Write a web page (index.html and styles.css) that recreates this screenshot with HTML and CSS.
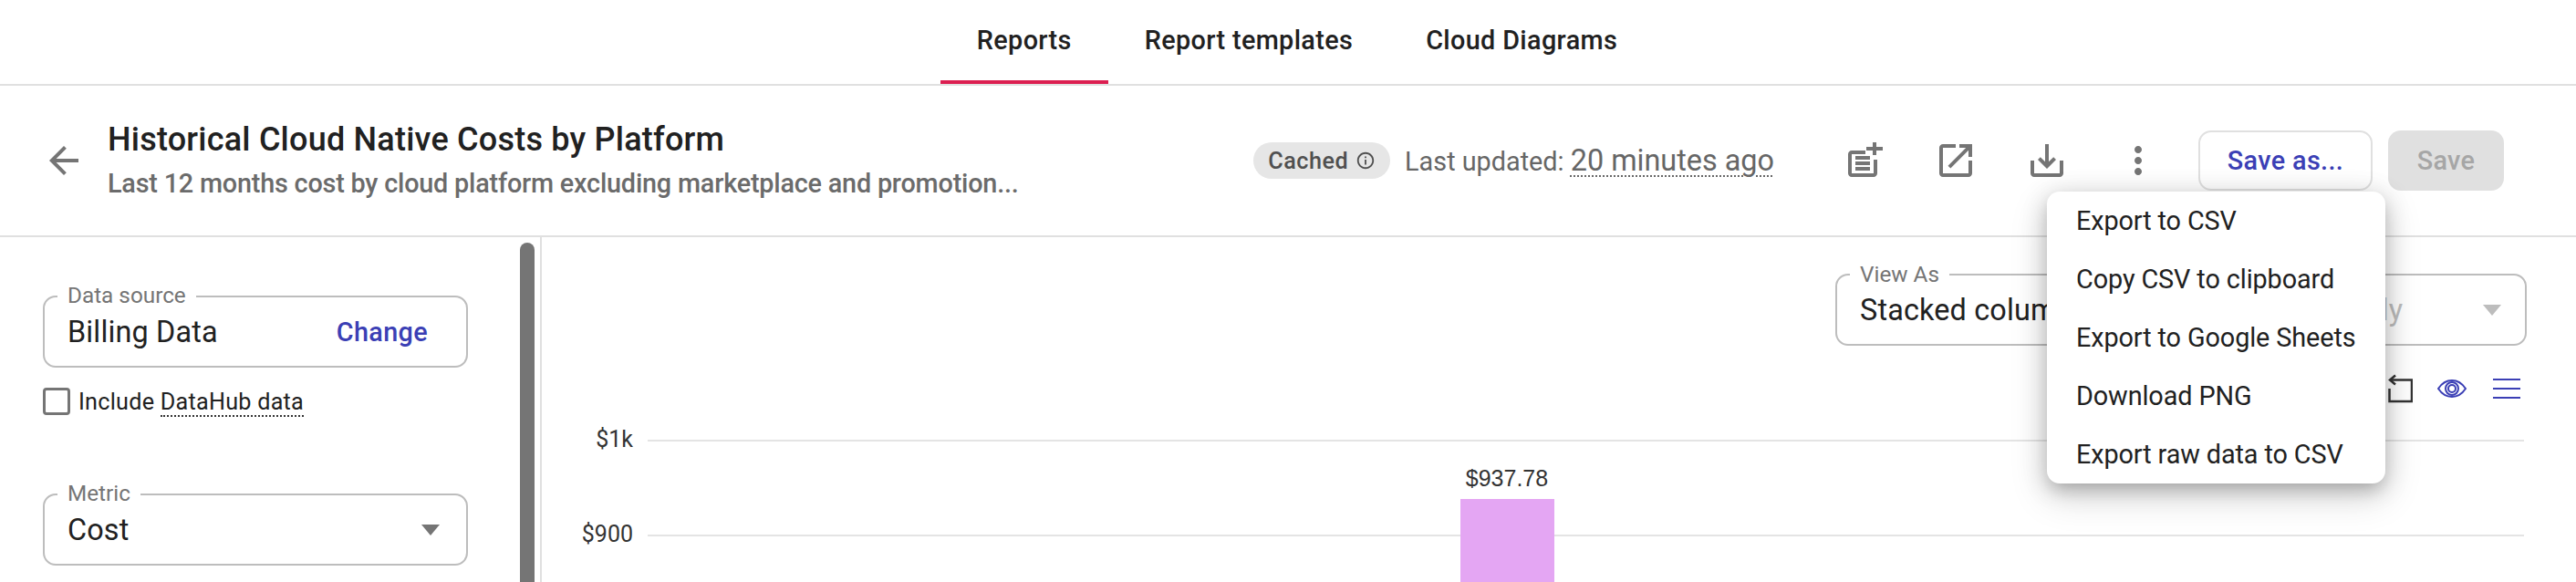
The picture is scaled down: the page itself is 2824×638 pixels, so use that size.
FILE: index.html
```html
<!DOCTYPE html>
<html lang="en">
<head>
  <meta charset="UTF-8" />
  <title>Historical Cloud Native Costs by Platform</title>
  <link rel="stylesheet" href="styles.css">
</head>
<body>

  <nav class="tabs">
    <a class="tab active">Reports</a>
    <a class="tab">Report templates</a>
    <a class="tab">Cloud Diagrams</a>
  </nav>

  <header class="report-header">
    <svg class="back-icon" viewBox="0 0 24 24"><path d="M20 11H7.83l5.59-5.59L12 4l-8 8 8 8 1.41-1.41L7.83 13H20v-2z"/></svg>
    <div class="report-title">
      <h1>Historical Cloud Native Costs by Platform</h1>
      <p>Last 12 months cost by cloud platform excluding marketplace and promotion...</p>
    </div>
    <span class="chip">Cached
      <svg viewBox="0 0 24 24"><path d="M11 7h2v2h-2zm0 4h2v6h-2zm1-9C6.48 2 2 6.48 2 12s4.48 10 10 10 10-4.48 10-10S17.52 2 12 2zm0 18c-4.41 0-8-3.59-8-8s3.59-8 8-8 8 3.59 8 8-3.59 8-8 8z"/></svg>
    </span>
    <span class="updated">Last updated: <span class="dotted">20 minutes ago</span></span>
    <div class="header-icons">
      <svg viewBox="0 0 24 24"><path d="M16.500 2h2v2.500H22v2h-3.500V9h-2V6.500H13v-2h3.500z"/><path d="M3 8.500c0-1.100.9-2 2-2h7.500v2H5V19h12v-7.500h2V19c0 1.100-.9 2-2 2H5c-1.100 0-2-.9-2-2z"/><path d="M7 9.500h8v2H7zM7 12.500h8v2H7zM7 15.500h8v2H7z"/></svg>
      <svg viewBox="0 0 24 24"><path d="M19 19H5V5h7V3H5c-1.110 0-2 .9-2 2v14c0 1.100.89 2 2 2h14c1.100 0 2-.9 2-2v-7h-2v7zM14 3v2h3.590l-9.830 9.830 1.410 1.410L19 6.410V10h2V3h-7z"/></svg>
      <svg viewBox="0 0 24 24"><path d="M19 12v7H5v-7H3v7c0 1.100.9 2 2 2h14c1.100 0 2-.9 2-2v-7h-2zm-6 .67l2.590-2.580L17 11.500l-5 5-5-5 1.410-1.410L11 12.670V3h2z"/></svg>
      <svg viewBox="0 0 24 24"><path d="M12 8c1.100 0 2-.9 2-2s-.9-2-2-2-2 .9-2 2 .9 2 2 2zm0 2c-1.100 0-2 .9-2 2s.9 2 2 2 2-.9 2-2-.9-2-2-2zm0 6c-1.100 0-2 .9-2 2s.9 2 2 2 2-.9 2-2-.9-2-2-2z"/></svg>
    </div>
    <button class="btn-outline">Save as...</button>
    <button class="btn-disabled">Save</button>
  </header>

  <ul class="menu">
    <li>Export to CSV</li>
    <li>Copy CSV to clipboard</li>
    <li>Export to Google Sheets</li>
    <li>Download PNG</li>
    <li>Export raw data to CSV</li>
  </ul>

  <div class="workspace">
    <aside class="sidebar">
      <div class="side-col">
        <div class="field">
          <label>Data source</label>
          <span class="value">Billing Data</span>
          <a class="change">Change</a>
        </div>
        <div class="check-row">
          <span class="checkbox"></span>
          <span>Include <span class="dotted-thin">DataHub data</span></span>
        </div>
        <div class="field metric">
          <label>Metric</label>
          <span class="value">Cost</span>
          <span class="caret"></span>
        </div>
      </div>
      <div class="scrollbar"></div>
    </aside>

    <main class="chart-area">
      <div class="chart-controls">
        <div class="field view-as">
          <label>View As</label>
          <span class="value">Stacked column</span>
        </div>
        <div class="field interval">
          <span class="value disabled">Monthly</span>
          <span class="caret light"></span>
        </div>
      </div>
      <div class="chart-tools">
        <svg class="tool-dark" viewBox="0 0 28 32"><path d="M2.500 16V30H27V6.500H3"/><path d="M9 1.500L3 6.500l6 5"/></svg>
        <svg class="tool-blue" viewBox="0 0 32 20"><path d="M1 10C5 4 10 1 16 1s11 3 15 9c-4 6-9 9-15 9S5 16 1 10z"/><circle cx="16" cy="10" r="7"/><circle cx="16" cy="10" r="4"/></svg>
        <div class="hamburger"><span></span><span></span><span></span></div>
      </div>
      <svg class="chart" width="2230" height="191">
        <text class="axis" x="100" y="43" text-anchor="end">$1k</text>
        <text class="axis" x="100" y="147" text-anchor="end">$900</text>
        <line class="grid" x1="116" y1="36" x2="2173" y2="36"/>
        <line class="grid" x1="116" y1="140" x2="2173" y2="140"/>
        <rect class="bar" x="1007" y="100" width="103" height="91"/>
        <text class="bar-label" x="1058" y="86" text-anchor="middle">$937.78</text>
      </svg>
    </main>
  </div>

</body>
</html>
```

FILE: styles.css
```css
html, body {
  margin: 0;
  height: 638px;
  overflow: hidden;
}

body {
  position: relative;
  background: #fff;
  font-family: Roboto, sans-serif;
  color: #212121;
}

.tabs {
  display: flex;
  justify-content: center;
  height: 92px;
  border-bottom: 2px solid #e0e0e0;
  padding-left: 20px;
}

.tab {
  display: flex;
  align-items: center;
  height: 88px;
  padding: 0 40px;
  font-size: 28.8px;
  font-weight: 500;
  letter-spacing: 0.36px;
}

.tab.active {
  border-bottom: 4px solid #dc1f51;
}

.report-header {
  display: flex;
  align-items: center;
  height: 164px;
  border-bottom: 2px solid #e0e0e0;
  padding: 0 79px 0 46px;
}

.back-icon {
  width: 48px;
  height: 48px;
  fill: #757575;
  flex-shrink: 0;
}

.report-title {
  flex: 1;
  margin-left: 24px;
  margin-bottom: 4px;
}

.report-title h1 {
  margin: 0 0 9px;
  font-size: 36px;
  line-height: 44px;
  font-weight: 500;
  letter-spacing: 0.22px;
}

.report-title p {
  margin: 0;
  font-size: 28.8px;
  line-height: 34px;
  font-weight: 500;
  letter-spacing: -0.2px;
  color: #6b6b6b;
}

.chip {
  display: flex;
  align-items: center;
  gap: 8px;
  height: 40px;
  padding: 0 16px;
  border-radius: 20px;
  background: #e6e6e6;
  color: #505050;
  font-size: 25.2px;
  font-weight: 500;
  letter-spacing: 0.5px;
}

.chip svg {
  width: 22px;
  height: 22px;
  fill: #505050;
}

.updated {
  margin-left: 16px;
  font-size: 28.8px;
  color: #666;
  white-space: nowrap;
}

.dotted {
  font-size: 32.4px;
  text-decoration: underline dotted 2px #666;
  text-underline-offset: 5px;
}

.header-icons {
  display: flex;
  gap: 52px;
  margin-left: 75px;
}

.header-icons svg {
  width: 48px;
  height: 48px;
  fill: #757575;
}

.btn-outline, .btn-disabled {
  height: 66px;
  border-radius: 14px;
  font-family: Roboto, sans-serif;
  font-size: 28.8px;
  font-weight: 500;
  letter-spacing: 0.36px;
}

.btn-outline {
  width: 191px;
  margin-left: 42px;
  background: #fff;
  border: 2px solid #e0e0e0;
  color: #3b3fb5;
}

.btn-disabled {
  width: 127px;
  margin-left: 17px;
  border: none;
  background: #e0e0e0;
  color: #a6a6a6;
}

/* export menu, open over the page */
.menu {
  position: absolute;
  left: 2244px;
  top: 210px;
  z-index: 5;
  width: 371px;
  margin: 0;
  padding: 0;
  list-style: none;
  background: #fff;
  border-radius: 14px;
  box-shadow: 0 9px 18px -5px rgba(0,0,0,.2), 0 14px 40px 2px rgba(0,0,0,.14), 0 5px 26px 4px rgba(0,0,0,.12);
}

.menu li {
  display: flex;
  align-items: center;
  height: 64px;
  padding-left: 32px;
  font-size: 28.8px;
  letter-spacing: -0.1px;
}

.workspace {
  display: flex;
  height: 378px;
}

.sidebar {
  display: flex;
  width: 592px;
  border-right: 2px solid #e0e0e0;
  flex-shrink: 0;
}

.side-col {
  width: 466px;
  margin-left: 47px;
  padding-top: 64px;
}

.scrollbar {
  width: 16px;
  margin: 6px 0 0 57px;
  height: 400px;
  border-radius: 8px;
  background: #757575;
}

/* outlined field with notched label */
.field {
  position: relative;
  display: flex;
  align-items: center;
  box-sizing: border-box;
  height: 79px;
  padding: 0 26px 0 25px;
  border: 2px solid #bdbdbd;
  border-radius: 14px;
  font-size: 32.4px;
}

.field label {
  position: absolute;
  left: 14px;
  top: -16px;
  padding: 0 11px;
  background: #fff;
  font-size: 24.3px;
  line-height: 28px;
  color: #757575;
}

.value {
  flex: 1;
  letter-spacing: 0.15px;
  white-space: nowrap;
}

.value.disabled {
  color: #bdbdbd;
}

.change {
  font-size: 28.8px;
  font-weight: 500;
  letter-spacing: 0.36px;
  color: #3b3fb5;
  margin-right: 16px;
}

.caret {
  width: 0;
  height: 0;
  border-left: 10px solid transparent;
  border-right: 10px solid transparent;
  border-top: 12px solid #757575;
}

.metric .caret {
  margin-right: 3px;
}

.caret.light {
  border-top-color: #bdbdbd;
}

.check-row {
  display: flex;
  align-items: center;
  gap: 9px;
  margin-top: 22px;
  font-size: 25.2px;
  letter-spacing: 0.25px;
}

.checkbox {
  box-sizing: border-box;
  width: 30px;
  height: 30px;
  border: 3px solid #757575;
  border-radius: 4px;
}

.dotted-thin {
  border-bottom: 2px dotted #333;
}

.metric {
  margin-top: 86px;
}

.chart-area {
  flex: 1;
  min-width: 0;
}

.chart-controls {
  display: flex;
  gap: 20px;
  padding: 40px 54px 0 0;
  justify-content: flex-end;
}

.view-as {
  width: 458px;
}

.view-as label {
  top: -15px;
}

.interval {
  width: 280px;
}

.chart-tools {
  display: flex;
  justify-content: flex-end;
  align-items: center;
  gap: 27px;
  height: 30px;
  margin-top: 32px;
  padding-right: 61px;
}

.chart-tools svg {
  fill: none;
}

.tool-dark {
  width: 28px;
  height: 32px;
  stroke: #333;
  stroke-width: 2.5;
}

.tool-blue {
  width: 32px;
  height: 20px;
  stroke: #3b3fb5;
  stroke-width: 2;
}

.hamburger {
  display: flex;
  flex-direction: column;
  gap: 8px;
  width: 30px;
  margin-left: 2px;
}

.hamburger span {
  height: 2px;
  background: #3b3fb5;
}

.chart {
  display: block;
  margin-top: 6px;
}

.grid {
  stroke: #e4e4e4;
  stroke-width: 2;
}

.bar {
  fill: #e4a6f3;
}

.axis {
  font-family: Roboto, sans-serif;
  font-size: 25px;
  fill: #333;
}

.bar-label {
  font-family: "Liberation Sans", sans-serif;
  font-size: 25px;
  fill: #333;
}
```
